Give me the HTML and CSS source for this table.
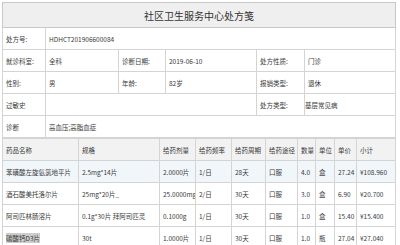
FILE: index.html
```html
<!DOCTYPE html>
<html lang="zh">
<head>
<meta charset="utf-8">
<link rel="stylesheet" href="styles.css">
</head>
<body>
<div class="page">
  <table class="info">
    <colgroup>
      <col class="c1"><col class="c2"><col class="c3"><col class="c4"><col class="c5"><col class="c6">
    </colgroup>
    <tr class="title-row"><td colspan="6" class="title">社区卫生服务中心处方笺</td></tr>
    <tr><td>处方号:</td><td colspan="5">HDHCT201906600084</td></tr>
    <tr><td>就诊科室:</td><td>全科</td><td>诊断日期:</td><td>2019-06-10</td><td>处方性质:</td><td>门诊</td></tr>
    <tr><td>性别:</td><td>男</td><td>年龄:</td><td>82岁</td><td>报销类型:</td><td>退休</td></tr>
    <tr><td>过敏史</td><td colspan="3"></td><td>处方类型:</td><td class="tight">基层常见病</td></tr>
    <tr><td>诊断</td><td colspan="5">高血压;高脂血症</td></tr>
  </table>
  <table class="drugs">
    <colgroup>
      <col class="d1"><col class="d2"><col class="d3"><col class="d4"><col class="d5"><col class="d6"><col class="d7"><col class="d8"><col class="d9"><col class="d10">
    </colgroup>
    <tr class="head"><td>药品名称</td><td>规格</td><td>给药剂量</td><td>给药频率</td><td>给药周期</td><td>给药途径</td><td>数量</td><td>单位</td><td>单价</td><td>小计</td></tr>
    <tr class="hover"><td>苯磺酸左旋氨氯地平片</td><td>2.5mg*14片</td><td>2.0000片</td><td>1/日</td><td>28天</td><td>口服</td><td>4.0</td><td>盒</td><td>27.24</td><td>¥108.960</td></tr>
    <tr><td>酒石酸美托洛尔片</td><td>25mg*20片_</td><td>25.0000mg</td><td>2/日</td><td>30天</td><td>口服</td><td>3.0</td><td>盒</td><td>6.90</td><td>¥20.700</td></tr>
    <tr><td>阿司匹林肠溶片</td><td>0.1g*30片 拜阿司匹灵</td><td>0.1000g</td><td>1/日</td><td>30天</td><td>口服</td><td>1.0</td><td>盒</td><td>15.40</td><td>¥15.400</td></tr>
    <tr><td><span class="sel">碳酸钙D3片</span></td><td>30t</td><td>1.0000片</td><td>1/日</td><td>30天</td><td>口服</td><td>1.0</td><td>瓶</td><td>27.04</td><td>¥27.040</td></tr>
  </table>
</div>
</body>
</html>
```

FILE: styles.css
```css
html, body {
  margin: 0;
  padding: 0;
  background: #ffffff;
  overflow: hidden;
}
body {
  font-family: "Noto Sans CJK SC", "Noto Sans", sans-serif;
  font-size: 6.5px;
  color: #3a3a3a;
}
.page {
  padding: 2px 5px 0 2px;
}
table {
  border-collapse: collapse;
  table-layout: fixed;
  width: 393px;
}
td {
  border: 1px solid #d4d4d4;
  padding: 0 3px;
  white-space: nowrap;
  overflow: hidden;
  vertical-align: middle;
}
.info tr {
  height: 22px;
}
.info .title-row {
  height: 25px;
}
.title {
  background: #efefef;
  border-color: #c8c8c8;
  text-align: center;
  font-size: 10px;
  color: #333333;
}
.tight {
  padding-left: 0;
}
.c1 { width: 43px; }
.c2 { width: 73px; }
.c3 { width: 47px; }
.c4 { width: 91px; }
.c5 { width: 48px; }
.c6 { width: 91px; }

.drugs {
  border-top: none;
}
.drugs tr {
  height: 22px;
}
.drugs .head td {
  background: #f2f2f2;
}
.drugs .hover td {
  background: #f1f6fb;
}
.sel {
  background: #cdcdcd;
}
.d1 { width: 76px; }
.d2 { width: 81px; }
.d3 { width: 36px; }
.d4 { width: 36px; }
.d5 { width: 34px; }
.d6 { width: 32px; }
.d7 { width: 18px; }
.d8 { width: 19px; }
.d9 { width: 22px; }
.d10 { width: 39px; }
```
